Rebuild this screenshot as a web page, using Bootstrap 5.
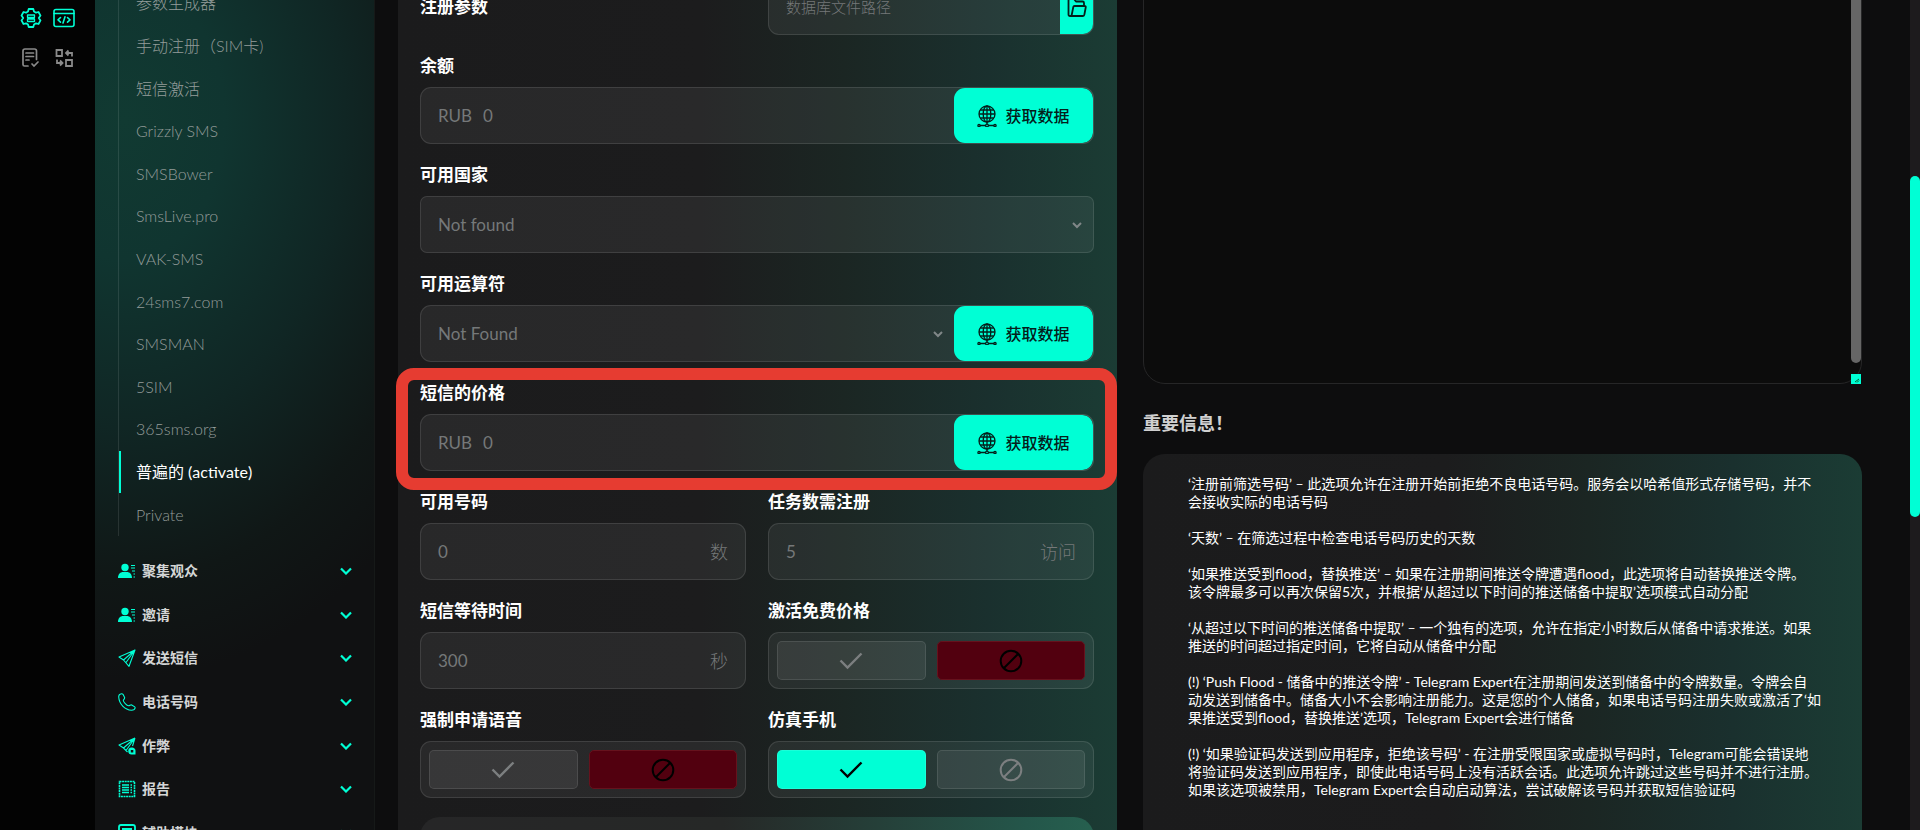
<!DOCTYPE html>
<html lang="zh-CN">
<head>
<meta charset="utf-8">
<meta name="viewport" content="width=device-width, initial-scale=1">
<title>Telegram Expert</title>
<link href="https://cdn.jsdelivr.net/npm/bootstrap@5.3.0/dist/css/bootstrap.min.css" rel="stylesheet">
<style>
:root { --accent: #00ffd5; --line: rgba(255,255,255,.11); --fill: rgba(255,255,255,.06); --muted: #757879; }
body { background: #0d0d0e; color: #fff; font-family: Lato, "Noto Sans CJK SC", sans-serif; font-size: 17px; line-height: 24px; }
.app-shell { height: 100vh; }
.rail { width: 95px; background: #030303; padding: 7px 0 0 20px; }
.rail-grid { display: grid; grid-template-columns: 22px 22px; gap: 16px 11px; }
.rail a { color: #8a8a8a; display: block; height: 24px; line-height: 0; }
.rail a.on { color: var(--accent); }
.side { width: 280px; border-right: 1px solid #161918; background: radial-gradient(400px 560px at 30px 120px, #113a32 0, #103530 25%, #102624 55%, #101716 82%, #101112 100%); }
.sub-list { height: 554px; margin: -18px 0 13px 23px; border-left: 1px solid rgba(255,255,255,.1); font-size: 16px; }
.sub-list a { color: #949c9a; font-weight: 300; text-decoration: none; padding-left: 15px; border-left: 2px solid transparent; }
.sub-list a.on { color: #fff; font-weight: 400; border-color: var(--accent); }
.menu-list { height: 306px; padding: 0 22px 0 23px; }
.menu-list button { background: none; border: 0; padding: 0; color: #d4d6d6; font-size: 14px; font-weight: 700; gap: 6px; }
.menu-list svg { color: var(--accent); }
.work { margin-left: 23px; margin-right: 48px; display: grid; grid-template-columns: minmax(0, 1fr) minmax(0, 1fr); gap: 26px; min-width: 0; }
.shade { background: linear-gradient(90deg, #1b1b1c 0, #1c1c1d 42%, #1b2623 62%, #1a302e 82%, #1b3c34 100%); }
.form-card { margin-top: -41px; padding: 19px 23px 40px 22px; }
.form-stack { display: grid; gap: 19px; }
.pair { display: grid; grid-template-columns: 1fr 1fr; gap: 22px; }
.field-label { display: block; font-weight: 700; margin-bottom: 9px; }
.box { height: 57px; border: 1px solid var(--line); border-radius: 11px; background: var(--fill); color: var(--muted); overflow: hidden; }
.box .form-control, .box .form-select { background-color: transparent; border: 0; border-radius: 0; box-shadow: none; color: var(--muted); font-size: 17px; padding: 0 17px; height: 100%; }
.box .form-control.path-input { font-size: 15px; font-weight: 300; }
.box .form-control::placeholder { color: var(--muted); opacity: 1; }
.box .form-select { padding-right: 36px; background-size: 12px 12px; background-position: right 10px center; background-image: url("data:image/svg+xml,%3Csvg xmlns='http://www.w3.org/2000/svg' viewBox='0 0 12 12'%3E%3Cpath d='M2 4l4 4 4-4' fill='none' stroke='%23808788' stroke-width='2'/%3E%3C/svg%3E"); }
.box.tight { border-radius: 7px; }
.box .unit { font-size: 18px; font-weight: 300; padding-right: 17px; white-space: nowrap; }
.box .lead-unit { padding-left: 17px; }
.box .lead-unit + .form-control { padding-left: 11px; }
.btn-get { width: 139px; background: var(--accent); border: 0; border-radius: 11px; font-size: 16px; font-weight: 500; color: #04201b; padding: 0; }
.btn-get:hover { background: #4dffe2; }
.btn-open { width: 33px; background: var(--accent); border: 0; padding: 0; color: #04201b; }
.toggle { padding: 8px; display: grid; grid-template-columns: 1fr 1fr; gap: 11px; }
.toggle label { border: 1px solid rgba(255,255,255,.1); background: rgba(255,255,255,.07); border-radius: 5px; color: #7c7f80; display: flex; align-items: center; justify-content: center; cursor: pointer; }
.toggle .btn-check:checked + .pick-yes { background: var(--accent); color: #000; }
.toggle .btn-check:checked + .pick-no { background: #52000f; border-color: #66121d; color: #000; }
.focus-group { position: relative; }
.focus-group::after { content: ""; position: absolute; inset: -13px -23px -19px -24px; border: 12px solid #e63c31; border-radius: 18px; pointer-events: none; z-index: 2; }
.sub-panel { height: 120px; border-radius: 20px; background: linear-gradient(90deg, #262627 0, #262827 45%, #24564a 90%, #26604f 100%); }
.log-wrap { position: relative; height: 484px; margin-top: -100px; }
.log-wrap textarea { width: 100%; height: 100%; display: block; background: #0c0c0c; border: 1px solid #262627; border-radius: 22px; resize: none; color: #ccc; padding: 16px; overflow: hidden; }
.log-bar { position: absolute; right: 1px; top: 0; bottom: 21px; width: 10px; border-radius: 5px; background: #666; }
.log-grip { position: absolute; right: 1px; bottom: 0; width: 10px; height: 10px; background: var(--accent); line-height: 0; }
.info-title { font-size: 18px; line-height: 24px; font-weight: 700; color: #d0d0d0; margin: 27px 0 19px; }
.info-card { border-radius: 22px; padding: 21px 12px 60px 45px; font-size: 14px; line-height: 18px; white-space: nowrap; }
.info-card p { margin-bottom: 18px; }
.page-bar { width: 10px; background: #1d1b1d; padding-top: 176px; }
.page-bar div { height: 341px; border-radius: 5px; background: var(--accent); }
svg { flex: none; }
</style>
</head>
<body>
<svg class="d-none" xmlns="http://www.w3.org/2000/svg">
  <symbol id="i-globe" viewBox="0 0 20 22"><g fill="none" stroke="currentColor" stroke-width="1.3"><circle cx="10" cy="9" r="8"/><ellipse cx="10" cy="9" rx="3.8" ry="8"/><path d="M10 1v18M2 9h16M3.2 5h13.6M3.2 13h13.6M3 20.5h5M12 20.5h5"/><circle cx="2" cy="20.5" r="1.1"/><circle cx="10" cy="20.5" r="1.4"/><circle cx="18" cy="20.5" r="1.1"/></g></symbol>
  <symbol id="i-check" viewBox="0 0 24 24"><path d="M1.500 11.500l7 7L22.500 4.500" fill="none" stroke="currentColor" stroke-width="2.400"/></symbol>
  <symbol id="i-ban" viewBox="0 0 24 24"><g fill="none" stroke="currentColor" stroke-width="2"><circle cx="12" cy="12" r="10.300"/><path d="M5 19L19 5"/></g></symbol>
  <symbol id="i-down" viewBox="0 0 12 8"><path d="M1 1.500l5 5 5-5" fill="none" stroke="currentColor" stroke-width="2.200"/></symbol>
  <symbol id="i-user" viewBox="0 0 18 18"><g fill="currentColor"><circle cx="7" cy="5.500" r="3.700"/><path d="M0 16c0-4 2.500-6 5-6h4c2.500 0 5 2 5 6zM13 3h4v1h-4zM13 5.500h4v1h-4zM14 8.500h3v1h-3zM15.500 11.500H17v1h-1.500zM15.500 14.500H17v1h-1.500z"/></g></symbol>
  <symbol id="i-plane" viewBox="0 0 18 18"><path d="M17 1L1 8l4.500 3L11 17.300zM17 1L5.500 11M17 1L8 13.500" fill="none" stroke="currentColor" stroke-width="1.100" stroke-linejoin="round"/></symbol>
  <symbol id="i-phone" viewBox="0 0 18 18"><path d="M3.500.700C1.500 1 .600 2.500.700 4c.500 7 6 13 12.800 13.300 2 0 3.500-1 3.700-2.500l-.5-1-3-1.800c-1-.5-2 .8-3 .8C8.500 12.500 5.500 9 5.300 7.500c0-1 1.700-1.700 1.300-3L5 1.300C4.600.800 4.200.600 3.500.700z" fill="none" stroke="currentColor" stroke-width="1.100"/></symbol>
  <symbol id="i-plane2" viewBox="0 0 18 18"><path d="M17 1L1 8l4.500 3 4 4M17 1L5.500 11M17 1L8 13.500M17 1l-2.500 8" fill="none" stroke="currentColor" stroke-width="1.100" stroke-linejoin="round"/><path d="M13.500 10.500a3.500 3.500 0 0 1 4 4v3h-3.500a3.500 3.500 0 0 1-.5-7zm-.7 2.500v2.500h2.500V13z" fill="currentColor" fill-rule="evenodd"/></symbol>
  <symbol id="i-report" viewBox="0 0 18 18"><path d="M1.500 1.500h15v15h-15z" fill="none" stroke="currentColor" stroke-width="1.600" stroke-dasharray="2 .6"/><path d="M4 5h7M4 7.500h7M4 10h7M4 12.500h7M12.500 5H14M12.500 7.500H14M12.500 10H14M12.500 12.500H14" stroke="currentColor" stroke-width="1.300"/></symbol>
  <symbol id="i-module" viewBox="0 0 18 18"><path d="M3 1h12q2 0 2 2v12q0 2-2 2H3q-2 0-2-2V3q0-2 2-2zM4 5h10M4 8h10" fill="none" stroke="currentColor" stroke-width="1.800"/></symbol>
</svg>

<div class="app-shell d-flex overflow-hidden">
  <nav class="rail flex-shrink-0" aria-label="工具">
    <div class="rail-grid">
      <a class="on" href="#" aria-label="设置"><svg width="22" height="22" viewBox="0 0 22 22" fill="none" stroke="currentColor" stroke-width="1.800" stroke-linejoin="round"><path d="M8.700 2h4.600l.7 2.500 2 1.200 2.500-.7 2 3.600-1.700 2.400 1.700 2.400-2 3.600-2.500-.7-2 1.200-.7 2.500H8.700L8 17.500l-2-1.200-2.500.7-2-3.600L3.200 11 1.500 8.600l2-3.600 2.500.7 2-1.200z"/><path d="M7.500 8h7v2.500h-7zM7.500 12h7v2.500h-7z" stroke-width="1.300"/></svg></a>
      <a class="on" href="#" aria-label="代码"><svg width="22" height="22" viewBox="0 0 22 22" fill="none" stroke="currentColor" stroke-width="1.600" stroke-linecap="round" stroke-linejoin="round"><rect x="1" y="2.500" width="20" height="17" rx="2"/><path d="M1 6.500h20M7.500 10.500L5 12.800l2.500 2.300M14.500 10.500l2.500 2.300-2.500 2.300M12 9.800l-2 6.200"/></svg></a>
      <a href="#" aria-label="任务"><svg width="20" height="22" viewBox="0 0 20 22" fill="none" stroke="currentColor" stroke-width="1.700" stroke-linecap="round"><path d="M8 19H4.500Q3 19 3 17.500V4q0-2 2-2h9.500q2 0 2 2v8.500M6 6h7.500M6 9.500h7.500M6 13h3M12 17l2 2 4-4"/></svg></a>
      <a href="#" aria-label="转换"><svg width="22" height="22" viewBox="0 0 22 22" fill="none" stroke="currentColor" stroke-width="1.800"><path d="M3.500 3H9v6H3.500zM13 13h6v6h-6zM19 9.500V6h-5.500M15.500 3.500L13 6l2.500 2.500M4 12.500V16h5M7 13.500L9.500 16 7 18.500"/></svg></a>
    </div>
  </nav>

  <aside class="side flex-shrink-0">
    <nav class="sub-list d-flex flex-column" aria-label="注册">
      <a class="flex-fill d-flex align-items-center" href="#">参数生成器</a>
      <a class="flex-fill d-flex align-items-center" href="#">手动注册（SIM卡)</a>
      <a class="flex-fill d-flex align-items-center" href="#">短信激活</a>
      <a class="flex-fill d-flex align-items-center" href="#">Grizzly SMS</a>
      <a class="flex-fill d-flex align-items-center" href="#">SMSBower</a>
      <a class="flex-fill d-flex align-items-center" href="#">SmsLive.pro</a>
      <a class="flex-fill d-flex align-items-center" href="#">VAK-SMS</a>
      <a class="flex-fill d-flex align-items-center" href="#">24sms7.com</a>
      <a class="flex-fill d-flex align-items-center" href="#">SMSMAN</a>
      <a class="flex-fill d-flex align-items-center" href="#">5SIM</a>
      <a class="flex-fill d-flex align-items-center" href="#">365sms.org</a>
      <a class="flex-fill d-flex align-items-center on" href="#" aria-current="page">普遍的 (activate)</a>
      <a class="flex-fill d-flex align-items-center" href="#">Private</a>
    </nav>
    <div class="menu-list d-flex flex-column">
      <button type="button" class="flex-fill d-flex align-items-center"><svg width="18" height="18"><use href="#i-user"/></svg>聚集观众<svg class="ms-auto" width="12" height="8"><use href="#i-down"/></svg></button>
      <button type="button" class="flex-fill d-flex align-items-center"><svg width="18" height="18"><use href="#i-user"/></svg>邀请<svg class="ms-auto" width="12" height="8"><use href="#i-down"/></svg></button>
      <button type="button" class="flex-fill d-flex align-items-center"><svg width="18" height="18"><use href="#i-plane"/></svg>发送短信<svg class="ms-auto" width="12" height="8"><use href="#i-down"/></svg></button>
      <button type="button" class="flex-fill d-flex align-items-center"><svg width="18" height="18"><use href="#i-phone"/></svg>电话号码<svg class="ms-auto" width="12" height="8"><use href="#i-down"/></svg></button>
      <button type="button" class="flex-fill d-flex align-items-center"><svg width="18" height="18"><use href="#i-plane2"/></svg>作弊<svg class="ms-auto" width="12" height="8"><use href="#i-down"/></svg></button>
      <button type="button" class="flex-fill d-flex align-items-center"><svg width="18" height="18"><use href="#i-report"/></svg>报告<svg class="ms-auto" width="12" height="8"><use href="#i-down"/></svg></button>
      <button type="button" class="flex-fill d-flex align-items-center"><svg width="18" height="18"><use href="#i-module"/></svg>辅助模块<svg class="ms-auto" width="12" height="8"><use href="#i-down"/></svg></button>
    </div>
  </aside>

  <main class="work flex-grow-1 align-items-start">
    <form class="form-card shade">
      <div class="form-stack">
        <div class="pair align-items-center">
          <label class="field-label mb-0" for="dbpath">注册参数</label>
          <div class="box d-flex">
            <input id="dbpath" class="form-control path-input" type="text" placeholder="数据库文件路径">
            <button type="button" class="btn-open flex-shrink-0" aria-label="打开文件"><svg width="20" height="20" viewBox="0 0 20 20" fill="none" stroke="currentColor" stroke-width="1.800" stroke-linejoin="round"><path d="M4 18H3q-1.500 0-1.500-1.500V2.500Q1.500 1 3 1h4l2 2.500h6.500Q17 3.500 17 5v2.500M4.500 18l1.800-9q.2-1 1.200-1h10q1.500 0 1.200 1.500l-1.300 7Q17.200 18 16 18z"/></svg></button>
          </div>
        </div>
        <div>
          <label class="field-label" for="balance">余额</label>
          <div class="box d-flex align-items-center">
            <span class="lead-unit">RUB</span><input id="balance" class="form-control" type="text" value="0">
            <button type="button" class="btn-get flex-shrink-0 h-100 d-flex align-items-center justify-content-center gap-2"><svg width="20" height="22"><use href="#i-globe"/></svg>获取数据</button>
          </div>
        </div>
        <div>
          <label class="field-label" for="country">可用国家</label>
          <div class="box tight"><select id="country" class="form-select"><option>Not found</option></select></div>
        </div>
        <div>
          <label class="field-label" for="operator">可用运算符</label>
          <div class="box d-flex align-items-center">
            <select id="operator" class="form-select"><option>Not Found</option></select>
            <button type="button" class="btn-get flex-shrink-0 h-100 d-flex align-items-center justify-content-center gap-2"><svg width="20" height="22"><use href="#i-globe"/></svg>获取数据</button>
          </div>
        </div>
        <div class="focus-group">
          <label class="field-label" for="price">短信的价格</label>
          <div class="box d-flex align-items-center">
            <span class="lead-unit">RUB</span><input id="price" class="form-control" type="text" value="0">
            <button type="button" class="btn-get flex-shrink-0 h-100 d-flex align-items-center justify-content-center gap-2"><svg width="20" height="22"><use href="#i-globe"/></svg>获取数据</button>
          </div>
        </div>
        <div class="pair">
          <div>
            <label class="field-label" for="numbers">可用号码</label>
            <div class="box d-flex align-items-center"><input id="numbers" class="form-control" type="text" value="0"><span class="unit">数</span></div>
          </div>
          <div>
            <label class="field-label" for="tasks">任务数需注册</label>
            <div class="box d-flex align-items-center"><input id="tasks" class="form-control" type="text" value="5"><span class="unit">访问</span></div>
          </div>
        </div>
        <div class="pair">
          <div>
            <label class="field-label" for="wait">短信等待时间</label>
            <div class="box d-flex align-items-center"><input id="wait" class="form-control" type="text" value="300"><span class="unit">秒</span></div>
          </div>
          <div role="radiogroup" aria-labelledby="t-free">
            <span class="field-label" id="t-free">激活免费价格</span>
            <div class="box toggle">
              <input class="btn-check" type="radio" name="free" id="free-y"><label class="pick-yes" for="free-y" aria-label="是"><svg width="24" height="24"><use href="#i-check"/></svg></label>
              <input class="btn-check" type="radio" name="free" id="free-n" checked><label class="pick-no" for="free-n" aria-label="否"><svg width="24" height="24"><use href="#i-ban"/></svg></label>
            </div>
          </div>
        </div>
        <div class="pair">
          <div role="radiogroup" aria-labelledby="t-voice">
            <span class="field-label" id="t-voice">强制申请语音</span>
            <div class="box toggle">
              <input class="btn-check" type="radio" name="voice" id="voice-y"><label class="pick-yes" for="voice-y" aria-label="是"><svg width="24" height="24"><use href="#i-check"/></svg></label>
              <input class="btn-check" type="radio" name="voice" id="voice-n" checked><label class="pick-no" for="voice-n" aria-label="否"><svg width="24" height="24"><use href="#i-ban"/></svg></label>
            </div>
          </div>
          <div role="radiogroup" aria-labelledby="t-emu">
            <span class="field-label" id="t-emu">仿真手机</span>
            <div class="box toggle">
              <input class="btn-check" type="radio" name="emu" id="emu-y" checked><label class="pick-yes" for="emu-y" aria-label="是"><svg width="24" height="24"><use href="#i-check"/></svg></label>
              <input class="btn-check" type="radio" name="emu" id="emu-n"><label class="pick-no" for="emu-n" aria-label="否"><svg width="24" height="24"><use href="#i-ban"/></svg></label>
            </div>
          </div>
        </div>
        <div class="sub-panel"></div>
      </div>
    </form>

    <section>
      <div class="log-wrap">
        <textarea aria-label="日志" readonly></textarea>
        <div class="log-bar"></div>
        <div class="log-grip"><svg width="10" height="10" viewBox="0 0 10 10" stroke="#063" fill="none"><path d="M4 8l4-3M6 8.500l2-2"/></svg></div>
      </div>
      <h2 class="info-title">重要信息！</h2>
      <div class="info-card shade">
        <p>‘注册前筛选号码’ – 此选项允许在注册开始前拒绝不良电话号码。服务会以哈希值形式存储号码，并不<br>会接收实际的电话号码</p>
        <p>‘天数’ – 在筛选过程中检查电话号码历史的天数</p>
        <p>‘如果推送受到flood，替换推送’ – 如果在注册期间推送令牌遭遇flood，此选项将自动替换推送令牌。<br>该令牌最多可以再次保留5次，并根据‘从超过以下时间的推送储备中提取’选项模式自动分配</p>
        <p>‘从超过以下时间的推送储备中提取’ – 一个独有的选项，允许在指定小时数后从储备中请求推送。如果<br>推送的时间超过指定时间，它将自动从储备中分配</p>
        <p>(!) ‘Push Flood - 储备中的推送令牌’ - Telegram Expert在注册期间发送到储备中的令牌数量。令牌会自<br>动发送到储备中。储备大小不会影响注册能力。这是您的个人储备，如果电话号码注册失败或激活了‘如<br>果推送受到flood，替换推送’选项，Telegram Expert会进行储备</p>
        <p>(!) ‘如果验证码发送到应用程序，拒绝该号码’ - 在注册受限国家或虚拟号码时，Telegram可能会错误地<br>将验证码发送到应用程序，即使此电话号码上没有活跃会话。此选项允许跳过这些号码并不进行注册。<br>如果该选项被禁用，Telegram Expert会自动启动算法，尝试破解该号码并获取短信验证码</p>
      </div>
    </section>
  </main>
  <div class="page-bar flex-shrink-0"><div></div></div>
</div>
<script src="https://cdn.jsdelivr.net/npm/bootstrap@5.3.0/dist/js/bootstrap.bundle.min.js"></script>
</body>
</html>
